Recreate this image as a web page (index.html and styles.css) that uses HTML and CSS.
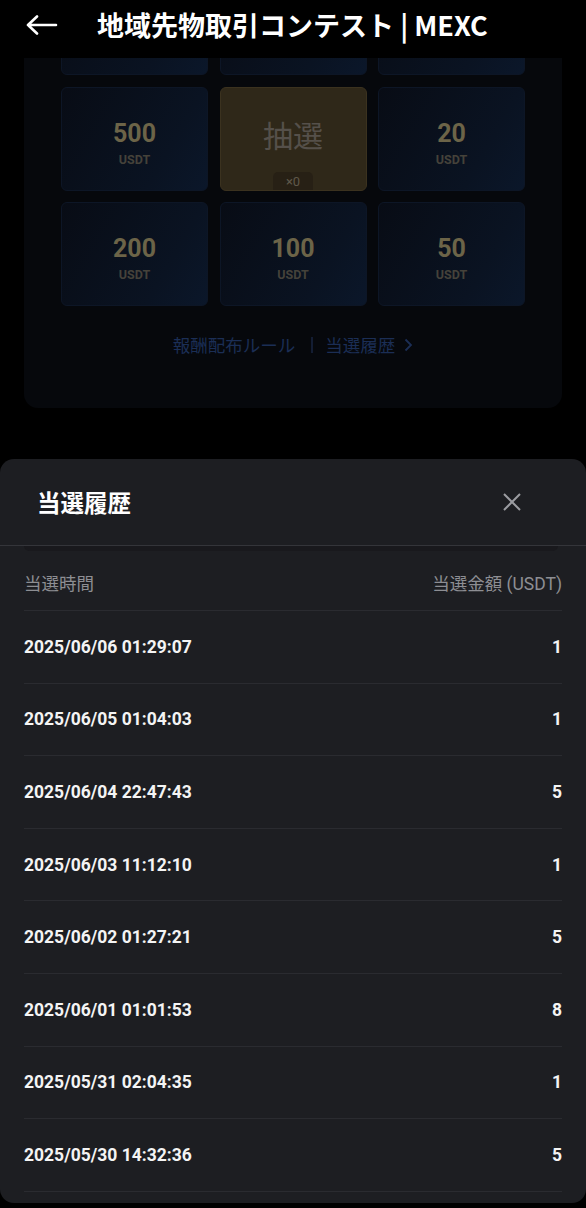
FILE: index.html
```html
<!DOCTYPE html>
<html lang="ja">
  <head>
    <meta charset="UTF-8" />
    <title>地域先物取引コンテスト | MEXC</title>
    <link rel="stylesheet" href="styles.css">
  </head>
  <body>
    <header class="topbar">
      <svg class="back" width="32" height="20" viewBox="0 0 32 20">
        <path d="M2 10h28M11 1.5L2 10l9 8.5" fill="none" stroke="#fff" stroke-width="2.6" stroke-linecap="round" stroke-linejoin="round" />
      </svg>
      <h1 class="title">地域先物取引コンテスト | MEXC</h1>
    </header>

    <div class="scroll">
      <section class="card">
        <div class="grid">
          <!-- first row is scrolled out of view -->
          <div class="tile"></div>
          <div class="tile"></div>
          <div class="tile"></div>

          <div class="tile"><span class="num">500</span><span class="unit">USDT</span></div>
          <div class="tile draw">
            <span class="draw-label">抽選</span>
            <span class="draw-count">×0</span>
          </div>
          <div class="tile"><span class="num">20</span><span class="unit">USDT</span></div>

          <div class="tile"><span class="num">200</span><span class="unit">USDT</span></div>
          <div class="tile"><span class="num">100</span><span class="unit">USDT</span></div>
          <div class="tile"><span class="num">50</span><span class="unit">USDT</span></div>
        </div>

        <div class="links">
          <span>報酬配布ルール</span>
          <span class="divider"></span>
          <span>当選履歴</span>
          <svg width="9" height="14" viewBox="0 0 9 14">
            <path d="M1.5 1.5L7 7l-5.5 5.5" fill="none" stroke="#1b2e55" stroke-width="1.8" />
          </svg>
        </div>
      </section>
    </div>

    <section class="sheet">
      <div class="sheet-head">
        <h2>当選履歴</h2>
        <svg width="20" height="20" viewBox="0 0 20 20">
          <path d="M2 2l16 16M18 2L2 18" fill="none" stroke="#9b9ca1" stroke-width="2" />
        </svg>
      </div>
      <div class="shade"></div>

      <div class="list">
        <div class="list-head">
          <span>当選時間</span>
          <span>当選金額 (USDT)</span>
        </div>
        <div class="row"><span>2025/06/06 01:29:07</span><span>1</span></div>
        <div class="row"><span>2025/06/05 01:04:03</span><span>1</span></div>
        <div class="row"><span>2025/06/04 22:47:43</span><span>5</span></div>
        <div class="row"><span>2025/06/03 11:12:10</span><span>1</span></div>
        <div class="row"><span>2025/06/02 01:27:21</span><span>5</span></div>
        <div class="row"><span>2025/06/01 01:01:53</span><span>8</span></div>
        <div class="row"><span>2025/05/31 02:04:35</span><span>1</span></div>
        <div class="row"><span>2025/05/30 14:32:36</span><span>5</span></div>
      </div>
    </section>
  </body>
</html>
```

FILE: styles.css
```css
html,
body {
  margin: 0;
  padding: 0;
  width: 586px;
  height: 1208px;
  overflow: hidden;
}

body {
  background: #000;
  font-family: Roboto, 'Noto Sans CJK JP', sans-serif;
  color: #fff;
}

/* top bar */
.topbar {
  height: 58px;
  display: flex;
  align-items: flex-start;
  padding-left: 26px;
  box-sizing: border-box;
  background: #000;
}

.back {
  margin-top: 15px;
}

.title {
  margin: 0 0 0 39px;
  font-family: 'Noto Sans CJK JP', sans-serif;
  font-size: 27px;
  font-weight: 700;
  line-height: 50px;
}

/* dimmed page behind the sheet */
.scroll {
  height: 401px;
  overflow: hidden;
}

.card {
  margin: -103px 24px 0;
  padding: 16px 0 51px;
  background: #06080c;
  border-radius: 14px;
}

.grid {
  display: grid;
  grid-template-columns: repeat(3, 147px);
  grid-auto-rows: 104px;
  gap: 11.5px;
  justify-content: center;
}

.tile {
  display: flex;
  flex-direction: column;
  align-items: center;
  padding-top: 32px;
  box-sizing: border-box;
  border-radius: 6px;
  border: 1px solid #0d1626;
  background: linear-gradient(120deg, #080c15, #0a1322 70%, #0b172a);
}

.num {
  font-size: 25px;
  font-weight: 700;
  line-height: 28px;
  color: #6c6448;
}

.unit {
  margin-top: 4px;
  font-size: 12.5px;
  font-weight: 700;
  line-height: 16px;
  color: #45423a;
}

.tile.draw {
  padding-top: 27px;
  background: #2f2819;
  border-color: #3b321f;
}

.draw-label {
  font-family: 'Noto Sans CJK JP', sans-serif;
  font-size: 30px;
  line-height: 38px;
  color: #55504a;
}

.draw-count {
  margin-top: auto;
  width: 40px;
  height: 18px;
  border-radius: 5px 5px 0 0;
  background: #272015;
  color: #5f584a;
  font-size: 13px;
  line-height: 19px;
  text-align: center;
}

.links {
  margin-top: 27px;
  display: flex;
  align-items: center;
  justify-content: center;
  font-family: 'Noto Sans CJK JP', sans-serif;
  font-size: 17.5px;
  line-height: 24px;
  color: #1b2e55;
}

.links .divider {
  width: 2px;
  height: 16px;
  margin: 0 12px 0 16px;
  background: #131d33;
}

.links svg {
  margin-left: 9px;
}

/* bottom sheet */
.sheet {
  height: 744px;
  background: #1d1e22;
  border-radius: 14px;
}

.sheet-head {
  height: 86px;
  display: flex;
  align-items: center;
  justify-content: space-between;
  padding: 0 64px 0 37px;
  border-bottom: 1px solid #34353a;
}

.sheet-head h2 {
  margin: 0;
  font-family: 'Noto Sans CJK JP', sans-serif;
  font-size: 23.5px;
  font-weight: 700;
}

.shade {
  height: 5px;
  margin: 0 28px 0 24px;
  background: #19191d;
  border-radius: 0 0 6px 6px;
}

.list {
  padding: 0 24px;
}

.list-head {
  height: 60px;
  display: flex;
  align-items: flex-end;
  justify-content: space-between;
  padding-bottom: 15px;
  box-sizing: border-box;
  border-bottom: 1px solid #2a2b30;
  font-size: 17.5px;
  line-height: 22px;
  color: #8d8e93;
}

.row {
  height: 72.6px;
  display: flex;
  align-items: center;
  justify-content: space-between;
  box-sizing: border-box;
  border-bottom: 1px solid #2a2b30;
  font-size: 17.5px;
  font-weight: 700;
  color: #f4f4f4;
}
```
